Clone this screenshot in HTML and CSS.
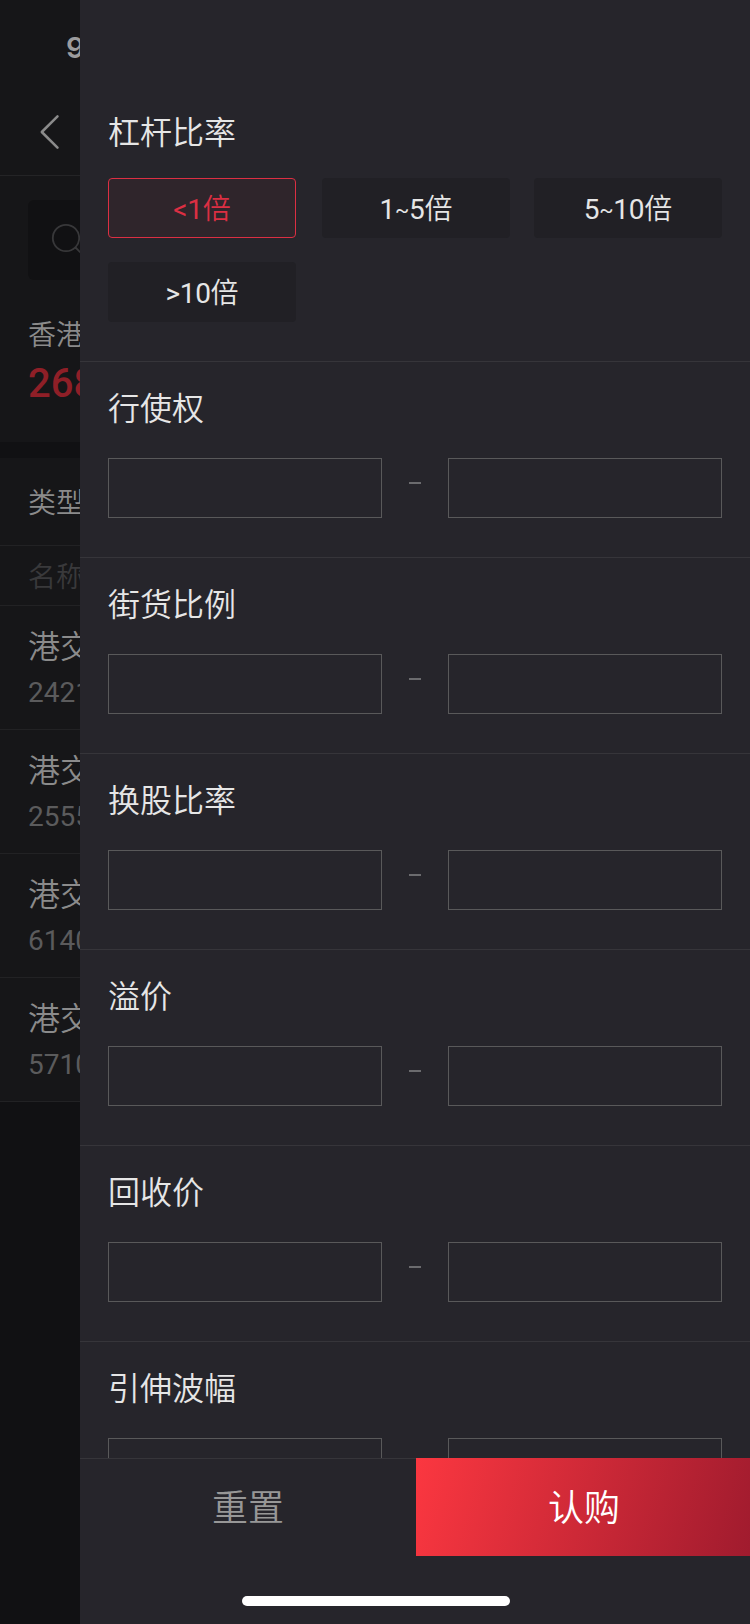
FILE: index.html
```html
<!DOCTYPE html>
<html lang="zh-CN">
<head>
<meta charset="utf-8">
<title>筛选</title>
<link rel="stylesheet" href="styles.css">
</head>
<body>
<div class="screen">
  <aside class="page">
    <div class="status">9</div>
    <div class="nav">
      <svg width="24" height="36" viewBox="0 0 24 36" fill="none" stroke="#8b8b8b" stroke-width="2.500" stroke-linecap="round" stroke-linejoin="round"><path d="M19.500 2.300 3.800 18l15.700 15.700"/></svg>
    </div>
    <div class="quote">
      <div class="search">
        <svg width="34" height="34" viewBox="0 0 34 34" fill="none" stroke="#38383a" stroke-width="1.8" stroke-linecap="round"><circle cx="15" cy="15" r="13.200"/><path d="m24.500 24.500 7 7"/></svg>
      </div>
      <div class="stock">香港</div>
      <div class="price">268</div>
    </div>
    <div class="type">类型</div>
    <div class="head">名称</div>
    <div class="row"><div class="name">港交</div><div class="code">2421</div></div>
    <div class="row"><div class="name">港交</div><div class="code">2555</div></div>
    <div class="row"><div class="name">港交</div><div class="code">6140</div></div>
    <div class="row"><div class="name">港交</div><div class="code">5710</div></div>
  </aside>
  <main class="drawer">
    <div class="filters">
      <section class="section ratio">
        <h2 class="title">杠杆比率</h2>
        <div class="chips">
          <button class="chip active"><span class="num">&lt;1</span>倍</button>
          <button class="chip"><span class="num">1<span class="tilde">~</span>5</span>倍</button>
          <button class="chip"><span class="num">5<span class="tilde">~</span>10</span>倍</button>
          <button class="chip"><span class="num">&gt;10</span>倍</button>
        </div>
      </section>
      <section class="section"><h2 class="title">行使权</h2><div class="range"><input class="field"><span class="dash"></span><input class="field"></div></section>
      <section class="section"><h2 class="title">街货比例</h2><div class="range"><input class="field"><span class="dash"></span><input class="field"></div></section>
      <section class="section"><h2 class="title">换股比率</h2><div class="range"><input class="field"><span class="dash"></span><input class="field"></div></section>
      <section class="section"><h2 class="title">溢价</h2><div class="range"><input class="field"><span class="dash"></span><input class="field"></div></section>
      <section class="section"><h2 class="title">回收价</h2><div class="range"><input class="field"><span class="dash"></span><input class="field"></div></section>
      <section class="section"><h2 class="title">引伸波幅</h2><div class="range"><input class="field"><span class="dash"></span><input class="field"></div></section>
    </div>
    <footer class="actions">
      <button class="reset">重置</button>
      <button class="submit">认购</button>
    </footer>
  </main>
  <div class="home-bar"></div>
</div>
</body>
</html>
```
FILE: styles.css
```css
* { box-sizing: border-box; }
body { margin: 0; background: #111113; font-family: Roboto, "Noto Sans CJK SC", sans-serif; }
button { border: 0; margin: 0; padding: 0; background: none; font: inherit; }

.screen { position: relative; display: grid; grid-template-columns: 80px 670px; width: 750px; height: 1624px; overflow: hidden; }

/* Dimmed page behind the drawer */
.page { overflow: hidden; white-space: nowrap; background: #111113; color: #8b8b8b; font-weight: 350; }
.page > div { width: 750px; }
.status { height: 88px; padding: 28px 0 0 66px; background: #161618; font: 600 29px/40px Inter, sans-serif; color: #9c9c9d; }
.nav { height: 88px; padding: 26px 0 0 38px; background: #161618; border-bottom: 1px solid #242426; }
.quote { height: 266px; padding: 24px 28px 0; background: #161618; }
.search { height: 80px; padding: 23px 0 0 23px; border-radius: 6px; background: #111113; }
.stock { margin-top: 36px; font-size: 28px; line-height: 40px; }
.price { margin-top: 5px; font-size: 40px; font-weight: 500; line-height: 46px; color: #8f1f27; }
.type { height: 88px; margin-top: 16px; padding: 26px 28px 0; background: #161618; border-bottom: 1px solid #222224; font-size: 28px; line-height: 40px; }
.head { height: 60px; padding: 12px 28px 0; background: #161618; border-bottom: 1px solid #222224; font-size: 28px; line-height: 40px; color: #39393b; }
.row { height: 124px; padding: 19px 28px 0; background: #161618; border-bottom: 1px solid #222224; }
.name { font-size: 32px; line-height: 44px; }
.code { margin-top: 6px; font-size: 28px; font-weight: 400; line-height: 36px; color: #5b5b5c; }

/* Filter drawer */
.drawer { background: #26252b; color: #e6e6e6; font-weight: 350; }
.filters { height: 1458px; overflow: hidden; }
.section { height: 196px; padding: 23px 28px 0; border-bottom: 1px solid #36353a; }
.ratio { height: 362px; padding-top: 109px; }
.ratio .chips { margin-top: 21px; }
.title { margin: 0; font-size: 32px; font-weight: 350; line-height: 48px; }
.chips { display: grid; grid-template-columns: 214px 212px 188px; row-gap: 24px; }
.chip { width: 188px; height: 60px; padding-bottom: 3px; border-radius: 4px; background: #212025; color: #e6e6e6; font-size: 28px; }
.num { font-weight: 400; letter-spacing: -0.3px; }
.tilde { font-size: 21px; vertical-align: 2px; }
.active { border: 1px solid #dc2f43; background: #2f252b; color: #dc2f43; }
.range { display: flex; justify-content: space-between; margin-top: 25px; }
.field { width: 274px; height: 60px; padding: 0 16px; border: 1px solid #59595a; background: none; color: inherit; font: inherit; }
.dash { width: 12px; height: 2px; margin-top: 24px; background: #6b6b6e; }

.actions { display: grid; grid-template-columns: 336px 334px; height: 98px; font-size: 36px; }
.reset { padding-bottom: 6px; border-top: 1px solid #36353a; color: #979797; }
.submit { padding: 0 0 5px 2px; background: linear-gradient(105deg, #fb3740, #a01b2e); color: #fff; }

/* System home indicator floating above the drawer */
.home-bar { position: absolute; left: 242px; bottom: 18px; width: 268px; height: 10px; border-radius: 5px; background: #fff; }
```
